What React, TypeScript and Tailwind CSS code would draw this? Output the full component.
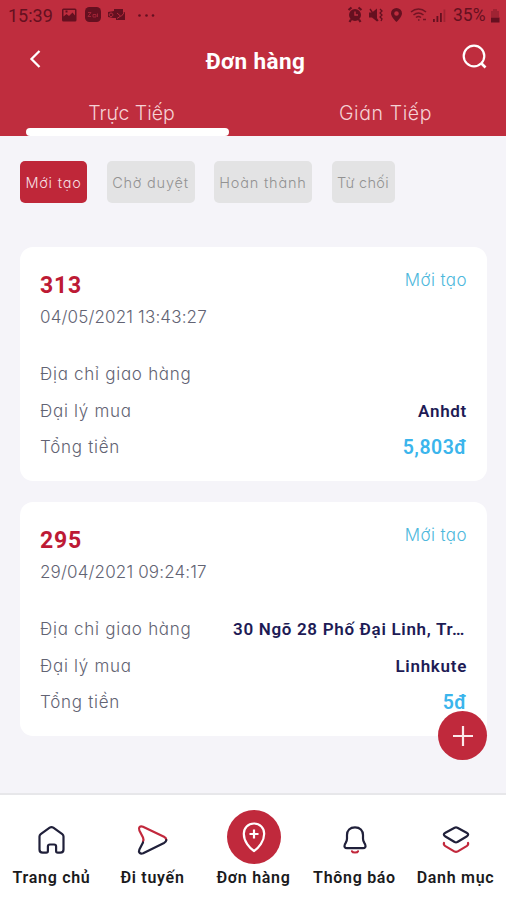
import { ReactNode } from 'react';
import { clsx } from 'clsx';

const thin = "font-['Inter',sans-serif] font-light [font-feature-settings:'cv11']";

type Order = {
  id: string;
  date: string;
  status: string;
  address: string;
  agent: string;
  total: string;
};

const orders: Order[] = [
  { id: '313', date: '04/05/2021 13:43:27', status: 'Mới tạo', address: '', agent: 'Anhdt', total: '5,803đ' },
  { id: '295', date: '29/04/2021 09:24:17', status: 'Mới tạo', address: '30 Ngõ 28 Phố Đại Linh, Tr…', agent: 'Linhkute', total: '5đ' },
];

const filters = [
  { label: 'Mới tạo', width: 'w-[67px]', active: true },
  { label: 'Chờ duyệt', width: 'w-[88px]', active: false },
  { label: 'Hoàn thành', width: 'w-[98px]', active: false },
  { label: 'Từ chối', width: 'w-[63px]', active: false },
];

const StatusBar = () => (
  <div className="flex h-8 items-center justify-between pl-2 pr-[6px] text-[#651020]">
    <div className="flex items-center">
      <span className="w-[53px] text-[18px] leading-none">15:39</span>
      <svg width="100" height="18" viewBox="0 0 100 18" fill="currentColor" className="-mt-[2px]">
        <path fillRule="evenodd" d="M2.500 2.500h11.500a1.500 1.500 0 0 1 1.500 1.500v10a1.500 1.500 0 0 1-1.500 1.500H2.500A1.500 1.500 0 0 1 1 14V4a1.500 1.500 0 0 1 1.500-1.500ZM2.500 4v6.500l3-2.500 2.500 2 3.500-3.500 2.500 3V4ZM4.500 4.500h2v2h-2Z" />
        <rect x="24" y="1" width="16" height="15" rx="4.500" />
        <path d="M27 6.500h3l-3 4h3M32 8.500h3v2.500h-3ZM36.500 7.500v3.500" stroke="#a02336" strokeWidth="1" fill="none" />
        <path d="M53 3h9v4l2-1v8h-9v-2h-3l-5-1V6l6-1Z" />
        <path d="m56 7 4 3.500L63 7M50 7a1.800 1.800 0 1 0 .1 0M56 12.500l3-2" stroke="#b72a3d" strokeWidth="1" fill="none" />
        <circle cx="78.500" cy="9.500" r="1.300" />
        <circle cx="85.500" cy="9.500" r="1.300" />
        <circle cx="92" cy="9.500" r="1.300" />
      </svg>
    </div>
    <div className="flex items-center">
      <svg width="104" height="18" viewBox="0 0 104 18" fill="currentColor" className="-ml-[4px] -mt-[2px] mr-[2px]">
        <circle cx="8" cy="9" r="6" />
        <path d="m1.500 4 3-2.500M14.500 4l-3-2.500M4 13.500 2.500 16M12 13.500l1.500 2.500" stroke="currentColor" strokeWidth="2.200" />
        <path d="M8 5.500V9h3" stroke="#bf2e40" strokeWidth="1.400" fill="none" />
        <path d="M22 6.500h3l5-4v13l-5-4h-3Z" />
        <path d="m23 3 8 12" stroke="currentColor" strokeWidth="1.400" />
        <path d="M33 3l2 2-2 2 2 2-2 2 2 2-1 2" stroke="currentColor" strokeWidth="1.300" fill="none" />
        <path fillRule="evenodd" d="M49.500 2a5.500 5.500 0 0 0-5.500 5.500C44 11 49.500 16 49.500 16S55 11 55 7.500A5.500 5.500 0 0 0 49.500 2Zm0 3.200a2.300 2.300 0 1 1 0 4.600 2.300 2.300 0 0 1 0-4.600Z" />
        <g fill="none" stroke="currentColor" strokeWidth="1.500" opacity=".85">
          <path d="M64 6c4.500-4 10.500-4 15 0M66.500 9c3-2.500 7-2.500 10 0M69 11.500c1.500-1.200 3.500-1.200 5 0" />
          <path d="M71 14h1.500M76 13.500h3" />
        </g>
        <path d="M86 13h1.800v3H86ZM89.500 10h1.800v6h-1.800ZM93 7h1.800v9H93Z" />
        <path d="M96.500 3.500h1.800V16h-1.800Z" opacity=".35" />
      </svg>
      <span className="w-[37px] text-[17.500px] leading-none">35%</span>
      <svg width="10" height="16" viewBox="0 0 10 16" fill="currentColor">
        <path d="M3 1h4v2H3ZM1 3h8v6H1Z" opacity=".35" />
        <rect x="1" y="9.500" width="8.500" height="5" />
      </svg>
    </div>
  </div>
);

const Header = () => (
  <header className="h-[136px] bg-[#bf2d3e] text-white">
    <StatusBar />
    <div className="flex h-[60px] items-center justify-between pl-[28px] pr-[18px]">
      <svg width="27" height="24" viewBox="0 0 27 24" fill="none" stroke="currentColor" strokeWidth="2.300" className="-mt-[7px]">
        <path d="m11.500 4-8 8 8 8" />
      </svg>
      <h1 className="-ml-[5px] -mt-[2px] text-[22.500px] font-bold leading-none tracking-[0.400px]">Đơn hàng</h1>
      <svg width="27" height="27" viewBox="0 0 27 27" fill="none" stroke="currentColor" strokeWidth="2.200" className="-mt-[11px]">
        <circle cx="13" cy="13" r="10.300" />
        <path d="m20 20 4.500 4.500" strokeWidth="2.600" />
      </svg>
    </div>
    <div className={clsx('grid h-[44px] grid-cols-2 text-[19.500px] text-[#f5d2d5]', thin)}>
      <div className="flex flex-col items-center justify-between pl-[1px]">
        <span className="pl-[9px] pt-[6px] leading-[30px]">Trực Tiếp</span>
        <span className="h-[8px] w-[203px] rounded-[4px] bg-white" />
      </div>
      <div className="pl-[12px] pt-[6px] text-center leading-[30px] tracking-[0.600px]">Gián Tiếp</div>
    </div>
  </header>
);

const Row = ({ label, children }: { label: string; children?: ReactNode }) => (
  <div className="flex h-[36.300px] items-center justify-between">
    <span className={clsx('text-[17px] tracking-[0.720px] text-[#626373]', thin)}>{label}</span>
    {children}
  </div>
);

const OrderCard = ({ order }: { order: Order }) => (
  <article className="h-[234px] rounded-[13px] bg-white px-5 pt-[19.500px]">
    <div className="flex h-[70px] justify-between">
      <div>
        <h2 className="text-[23px] font-bold leading-[38px] tracking-[0.800px] text-[#bd1a35]">{order.id}</h2>
        <p className={clsx('text-[17px] leading-[24px] tracking-[0.150px] text-[#626373]', thin)}>{order.date}</p>
      </div>
      <span className={clsx('pt-[1px] text-[17px] leading-[24px] tracking-[0.400px] text-[#4db8dc]', thin)}>{order.status}</span>
    </div>
    <div className="mt-[20.500px] font-semibold text-[#1d1b55]">
      <Row label="Địa chỉ giao hàng">
        <span className="pr-[2px] text-[17px] tracking-[0.680px]">{order.address}</span>
      </Row>
      <Row label="Đại lý mua">
        <span className="text-[17px] tracking-[0.700px]">{order.agent}</span>
      </Row>
      <Row label="Tổng tiền">
        <span className="text-[19.500px] tracking-[0.500px] text-[#3bb5ec]">{order.total}</span>
      </Row>
    </div>
  </article>
);

const HomeIcon = () => (
  <svg width="32" height="32" viewBox="0 0 32 32" fill="none" stroke="#20203a" strokeWidth="2.200" strokeLinejoin="round">
    <path d="M3.500 12.500c0-1 .4-1.700 1.200-2.300l9-6.500c1.100-.8 2.500-.8 3.600 0l9 6.500c.8.600 1.200 1.300 1.200 2.300v13c0 2.200-1 3.200-3.200 3.200h-2.500c-1 0-1.700-.7-1.700-1.700v-4.500c0-1.400-.7-2-2-2h-4.200c-1.300 0-2 .6-2 2V27c0 1-.7 1.700-1.700 1.700H6.700C4.500 28.700 3.500 27.700 3.500 25.500Z" />
  </svg>
);

const RouteIcon = () => (
  <svg width="32" height="32" viewBox="0 0 32 32" fill="none" strokeWidth="2.200" strokeLinejoin="round" strokeLinecap="round">
    <path d="M6 17.500c.8-1.500.5-2.800 0-4L2.400 6.500c-1.400-3 .7-5 3.600-3.800L27 12.800c1.700.9 2.300 1.800 2.300 3.200" stroke="#c2283c" />
    <path d="M29.300 16c0 1.200-.8 2.200-2.300 3L6.200 29.200c-3 1.200-5.100-.8-3.800-3.700l3.600-7" stroke="#20203a" />
  </svg>
);

const BellIcon = () => (
  <svg width="32" height="32" viewBox="0 0 32 32" fill="none" strokeWidth="2.200" strokeLinejoin="round" strokeLinecap="round">
    <path d="M16 3.300c-5 0-8 3.200-8 7.700v3.500c0 1.500-.3 2.500-1.100 3.900l-1.100 2.200c-.9 2 0 3.600 2.200 3.600h16c2.200 0 3.100-1.600 2.200-3.600l-1.100-2.200c-.8-1.400-1.100-2.400-1.100-3.900V11c0-4.500-3-7.700-8-7.700Z" stroke="#20203a" />
    <path d="M13 27.300c.6 1.600 5.400 1.600 6 0" stroke="#c2283c" />
  </svg>
);

const LayersIcon = () => (
  <svg width="32" height="32" viewBox="0 0 32 32" fill="none" strokeWidth="2.200" strokeLinejoin="round" strokeLinecap="round">
    <path d="m14.600 3.700-9.200 5c-2.100 1.200-2.100 2.500 0 3.800l9.200 5.500c1 .5 1.800.5 2.800 0l9.200-5.500c2.100-1.300 2.100-2.600 0-3.800l-9.200-5c-1-.5-1.800-.5-2.800 0Z" stroke="#20203a" />
    <path d="M4 19c-.5 1.300 0 2.200 1.400 3.100l9.200 5.500c1 .5 1.800.5 2.800 0l9.200-5.500c1.400-.9 1.900-1.800 1.400-3.100" stroke="#c2283c" />
  </svg>
);

const PinIcon = () => (
  <svg width="34" height="34" viewBox="0 0 34 34" fill="none" stroke="white" strokeWidth="2.200">
    <path d="M17 3.500C11 3.500 6.800 8 6.800 13.700 6.800 21.500 12.500 28 17 31c4.500-3 10.200-9.500 10.200-17.300C27.200 8 23 3.500 17 3.500Z" />
    <path d="M17 9.500v9M12.500 14h9" />
  </svg>
);

const navItems = [
  { label: 'Trang chủ', icon: <HomeIcon /> },
  { label: 'Đi tuyến', icon: <RouteIcon /> },
  { label: 'Đơn hàng', icon: <PinIcon />, active: true },
  { label: 'Thông báo', icon: <BellIcon /> },
  { label: 'Danh mục', icon: <LayersIcon /> },
];

const App = () => {
  return (
    <div className="relative flex h-[900px] w-[506px] flex-col overflow-hidden bg-[#f5f4f9] font-['Roboto',sans-serif]">
      <Header />
      <main className="flex-1 px-5 pt-[25px]">
        <div className="flex gap-[19.500px]">
          {filters.map((f) => (
            <button
              key={f.label}
              className={clsx(
                'h-[42px] whitespace-nowrap rounded-[5px] pt-[1px] text-[14.500px]',
                thin,
                f.width,
                f.active ? 'bg-[#bf2739] text-[#f6dfe1]' : 'bg-[#e3e3e4] text-[#929292]',
                f.label === 'Từ chối' ? 'tracking-[0.300px]' : 'tracking-[0.800px]'
              )}
            >
              {f.label}
            </button>
          ))}
        </div>
        <div className="-mr-[1px] mt-11 flex flex-col gap-[21px]">
          {orders.map((o) => (
            <OrderCard key={o.id} order={o} />
          ))}
        </div>
      </main>

      <button className="absolute left-[438px] top-[711px] flex h-[49px] w-[49px] items-center justify-center rounded-full bg-[#c0293c]">
        <svg width="22" height="22" viewBox="0 0 22 22" stroke="#fbe9eb" strokeWidth="2.200">
          <path d="M11 1v20M1 11h20" />
        </svg>
      </button>

      <nav className="grid h-[107px] grid-cols-5 border-t-2 border-[#e7e7ea] bg-white pl-[1px]">
        {navItems.map((item) => (
          <div key={item.label} className="flex w-[101px] flex-col items-center pt-[15px]">
            <div className={clsx('flex h-[54px] w-[54px] items-center justify-center rounded-full', item.active ? 'bg-[#c0293c]' : 'pt-[5px]')}>
              {item.icon}
            </div>
            <span className="whitespace-nowrap text-[16px] font-semibold leading-[27px] tracking-[0.700px] text-[#1a1a1c]">{item.label}</span>
          </div>
        ))}
      </nav>
    </div>
  );
};

export default App;
